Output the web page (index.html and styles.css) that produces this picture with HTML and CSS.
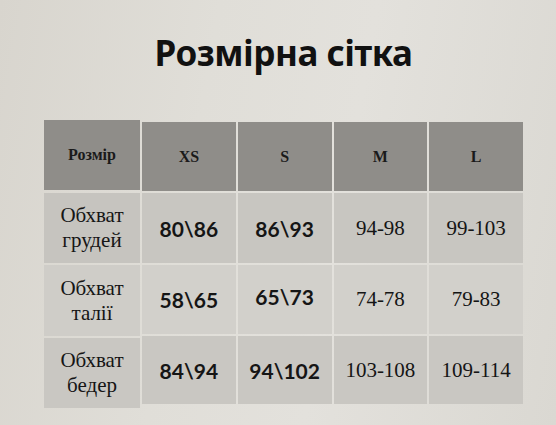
FILE: index.html
```html
<!DOCTYPE html>
<html lang="uk">
<head>
<meta charset="utf-8">
<title>Розмірна сітка</title>
<link rel="stylesheet" href="styles.css">
</head>
<body>
<main class="page">
  <h1 class="title">Розмірна сітка</h1>
  <div class="chart">
    <div class="labels">
      <div class="cell head label-head">Розмір</div>
      <div class="cell label r1">Обхват<br>грудей</div>
      <div class="cell label r2">Обхват<br>талії</div>
      <div class="cell label r3">Обхват<br>бедер</div>
    </div>
    <div class="grid">
      <div class="cell head">XS</div>
      <div class="cell head">S</div>
      <div class="cell head">M</div>
      <div class="cell head">L</div>

      <div class="cell bold r1">80\86</div>
      <div class="cell bold r1">86\93</div>
      <div class="cell serif r1">94-98</div>
      <div class="cell serif r1">99-103</div>

      <div class="cell bold r2">58\65</div>
      <div class="cell bold r2 up">65\73</div>
      <div class="cell serif r2">74-78</div>
      <div class="cell serif r2">79-83</div>

      <div class="cell bold r3">84\94</div>
      <div class="cell bold r3">94\102</div>
      <div class="cell serif r3">103-108</div>
      <div class="cell serif r3">109-114</div>
    </div>
  </div>
</main>
</body>
</html>
```
FILE: styles.css
```css
html, body {
  margin: 0;
  padding: 0;
}
body {
  width: 556px;
  height: 425px;
  overflow: hidden;
  background: linear-gradient(100deg, #d8d5ce 0%, #e0ded8 35%, #e3e1dc 60%, #dad8d2 100%);
}
.page {
  padding: 0 33px 0 44px;
  display: flex;
  flex-direction: column;
}
.title {
  margin: 31px 0 0 0;
  font-family: "Noto Sans", "DejaVu Sans", sans-serif;
  font-weight: 700;
  font-size: 35px;
  line-height: 43px;
  text-align: center;
  color: #111;
  letter-spacing: -0.5px;
}
.chart {
  margin-top: 46px;
  display: flex;
  gap: 2px;
  align-items: flex-start;
}
.labels {
  width: 96px;
  display: flex;
  flex-direction: column;
  gap: 2px;
}
.labels .label-head {
  height: 70px;
  margin-bottom: 1px;
}
.labels .r1 { height: 70px; }
.labels .r2 { height: 71px; }
.labels .r3 { height: 70px; }
.grid {
  margin-top: 2px;
  flex: 1;
  display: grid;
  grid-template-columns: repeat(4, 1fr);
  grid-template-rows: 69px 70px 69px 68px;
  gap: 2px;
}
.cell {
  display: flex;
  align-items: center;
  justify-content: center;
  text-align: center;
  color: #151515;
  background: #c8c6c1;
}
.head {
  background: #8f8d89;
  font-family: "Liberation Serif", "Times New Roman", serif;
  font-weight: 700;
  font-size: 16px;
  color: #1a1a1a;
}
.label {
  font-family: "Liberation Serif", "Times New Roman", serif;
  font-size: 21px;
  line-height: 25px;
  background: #c6c4bf;
}
.r2 { background: #d2d0cb; }
.labels .r2 { background: #cfcdc8; }
.r3 { background: #c9c7c2; }
.bold {
  font-family: Lato, "Open Sans", sans-serif;
  font-weight: 700;
  font-size: 21px;
}
.up {
  padding-bottom: 6px;
}
.serif {
  font-family: "Liberation Serif", "Times New Roman", serif;
  font-size: 21px;
}
```
